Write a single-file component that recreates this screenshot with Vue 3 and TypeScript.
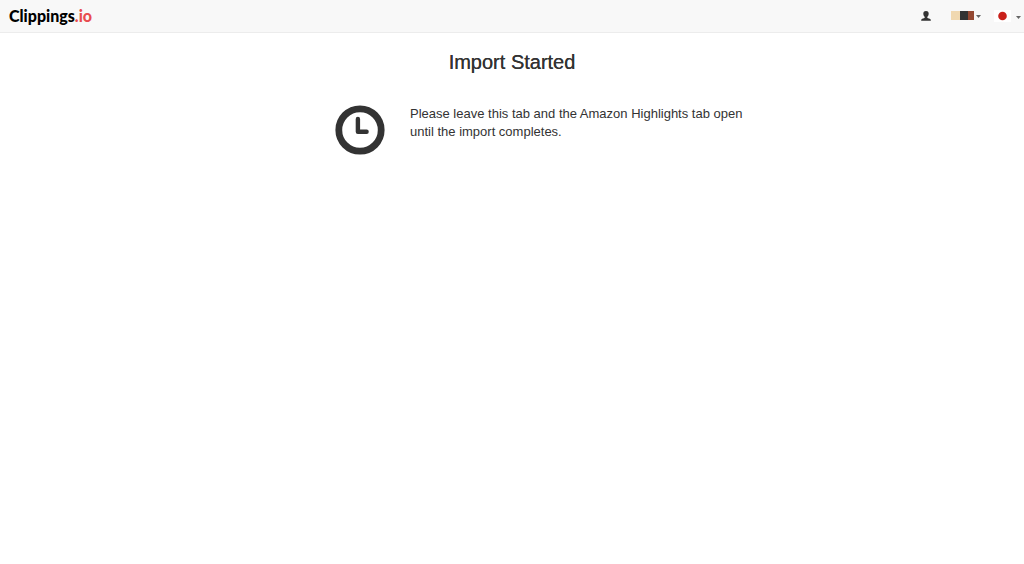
<script setup lang="ts">
const title: string = 'Import Started'
const message: string =
  'Please leave this tab and the Amazon Highlights tab open until the import completes.'
</script>

<template>
  <div class="page">
    <header class="navbar">
      <a class="brand" href="#" aria-label="Clippings.io">Clippings<span class="brand-suffix">.io</span></a>
      <nav class="tools" aria-label="Account and language">
        <button class="tool" type="button" aria-label="Account">
          <svg class="user" viewBox="0 0 10 10" aria-hidden="true">
            <path d="M5 0C3 0 2.200 1.200 2.300 2.700C2.400 4.200 3 5.200 3.700 5.900V6.800C3.200 7.500 0.600 7.600 0.200 8.700V9.800H9.800V8.700C9.400 7.600 6.800 7.500 6.300 6.800V5.900C7 5.200 7.600 4.200 7.700 2.700C7.800 1.200 7 0 5 0Z" />
          </svg>
        </button>
        <button class="tool" type="button" aria-label="Colour theme">
          <span class="swatches">
            <span class="swatch sand"></span>
            <span class="swatch dark"></span>
            <span class="swatch rust"></span>
          </span>
          <svg class="caret" viewBox="0 0 5 3" aria-hidden="true"><path d="M0 0H5L2.500 3Z" /></svg>
        </button>
        <button class="tool language" type="button" aria-label="Language: Japanese">
          <svg class="flag" viewBox="0 0 17 12" aria-hidden="true">
            <rect width="17" height="12" fill="#fff" />
            <circle cx="8.500" cy="6" r="4.300" fill="#c9211b" />
          </svg>
          <svg class="caret low" viewBox="0 0 5 3" aria-hidden="true"><path d="M0 0H5L2.500 3Z" /></svg>
        </button>
      </nav>
    </header>
    <main class="content">
      <h1>{{ title }}</h1>
      <section class="status">
        <svg class="clock" viewBox="0 0 50 50" aria-hidden="true">
          <circle cx="25" cy="25" r="21.200" fill="none" stroke="#333" stroke-width="6.800" />
          <path d="M22.900 14V26.800H31.600" fill="none" stroke="#333" stroke-width="4.400" stroke-linecap="round" stroke-linejoin="round" />
        </svg>
        <p>{{ message }}</p>
      </section>
    </main>
  </div>
</template>

<style>
body {
  margin: 0;
  background: #fff;
}
</style>

<style scoped>
.page {
  color: #333;
  font-family: "Liberation Sans", Arial, sans-serif;
}

.navbar {
  display: flex;
  align-items: center;
  justify-content: space-between;
  box-sizing: border-box;
  height: 33px;
  padding: 0 3px 0 9px;
  border-bottom: 1px solid #ececec;
  background: #f8f8f8;
}

.brand {
  color: #000;
  font-family: Lato, sans-serif;
  font-size: 16px;
  font-weight: 900;
  line-height: 20px;
  text-decoration: none;
}

.brand-suffix {
  color: #e84c4f;
}

.tools {
  display: flex;
  align-items: center;
  gap: 20px;
}

.tool {
  display: flex;
  align-items: center;
  gap: 2px;
  padding: 0;
  border: 0;
  background: none;
  cursor: pointer;
}

.language {
  gap: 5px;
  margin-left: -7px;
}

.user {
  width: 10px;
  height: 10px;
  fill: #333;
}

.swatches {
  display: flex;
  height: 9px;
  margin-bottom: 1px;
}

.swatch.sand {
  width: 9px;
  background: #f0d8b0;
}

.swatch.dark {
  width: 8px;
  background: #333;
}

.swatch.rust {
  width: 6px;
  background: #944832;
}

.caret {
  width: 5px;
  height: 3px;
  fill: #666;
}

.caret.low {
  margin-top: 2px;
}

.flag {
  width: 17px;
  height: 12px;
}

.content {
  padding: 17px 16px;
}

h1 {
  margin: 0;
  font-size: 20px;
  font-weight: 400;
  line-height: 24px;
  text-align: center;
  text-shadow: 0 0 0 #333;
}

.status {
  display: grid;
  grid-template-columns: 50px minmax(0, 1fr);
  column-gap: 25px;
  box-sizing: border-box;
  max-width: 466px;
  margin: 31px auto 0;
  padding-left: 56px;
}

.clock {
  width: 50px;
  height: 50px;
}

p {
  margin: 0;
  font-size: 13px;
  line-height: 18px;
}
</style>
